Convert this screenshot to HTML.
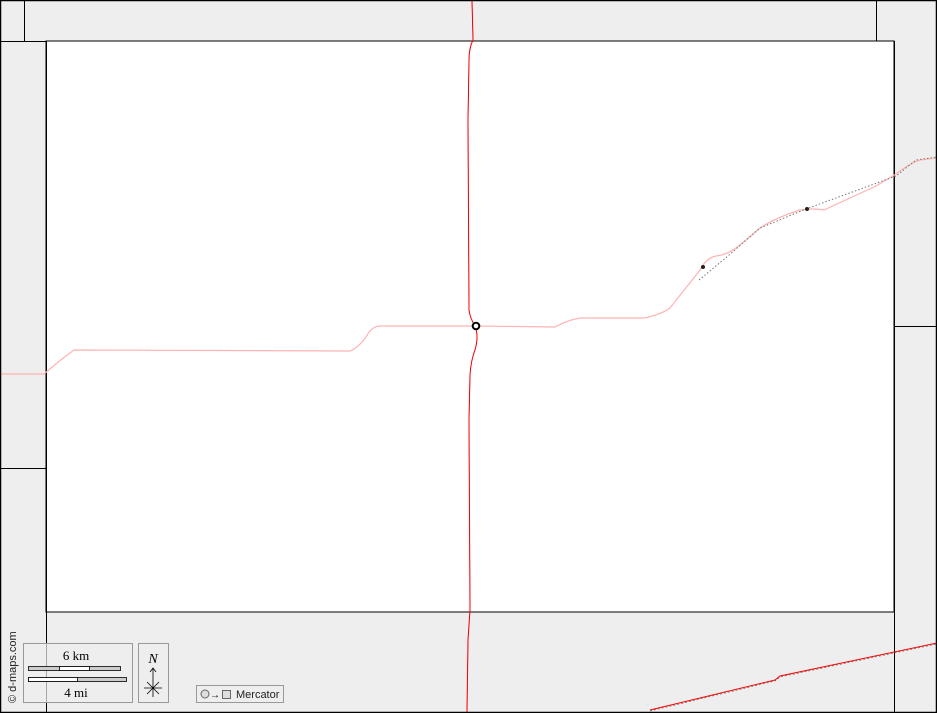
<!DOCTYPE html>
<html><head><meta charset="utf-8"><style>
html,body{margin:0;padding:0;width:937px;height:713px;overflow:hidden;background:#eee}
</style></head><body>
<svg width="937" height="713" viewBox="0 0 937 713" xmlns="http://www.w3.org/2000/svg" style="position:absolute;left:0;top:0">
<rect x="0" y="0" width="937" height="713" fill="#eee"/>
<rect x="46" y="41" width="848" height="571" fill="#fff" stroke="#000" stroke-width="1"/>
<g stroke="#000" stroke-width="1" fill="none">
<line x1="24.5" y1="0" x2="24.5" y2="41"/>
<line x1="0" y1="41.5" x2="46" y2="41.5"/>
<line x1="876.5" y1="0" x2="876.5" y2="41"/>
<line x1="46.5" y1="41" x2="46.5" y2="713"/>
<line x1="0" y1="468.5" x2="46" y2="468.5"/>
<line x1="894.5" y1="41" x2="894.5" y2="713"/>
<line x1="894" y1="326.5" x2="937" y2="326.5"/>
</g>
<!-- vertical road -->
<path d="M472 0 L473 40 Q469 48 469 60 L468 120 L469 310 Q470 318 475 326 Q479 336 475 350 Q471 360 470 375 L469 420 L470 610 L468 640 L467 713" stroke="#000" stroke-width="0.6" fill="none"/>
<path d="M472 0 L473 40 Q469 48 469 60 L468 120 L469 310 Q470 318 475 326 Q479 336 475 350 Q471 360 470 375 L469 420 L470 610 L468 640 L467 713" stroke="#f00" stroke-width="1" fill="none"/>
<!-- horizontal road -->
<path d="M0 374 L44 374 Q60 360 74 350 L350 351 Q358 348 366 337 Q372 326 380 326 L476 326 L555 327 Q570 319 582 318 L645 318 Q662 314 670 308 L700 270 Q706 258 716 256 Q728 255 740 245 L760 228 Q775 218 800 210 Q812 208 824 210 L876 186 L896 174 Q910 163 920 160 L937 158" stroke="#ffb3b3" stroke-width="1.2" fill="none"/>
<path d="M699 280 L728 256 L760 228 L806 209 L896 176 L916 160 L937 157" stroke="#777" stroke-width="1" stroke-dasharray="1.5,2" fill="none"/>
<circle cx="703" cy="267" r="2" fill="#222"/>
<circle cx="807" cy="209" r="2" fill="#222"/>
<circle cx="476" cy="326" r="3.3" fill="#fff" stroke="#000" stroke-width="2"/>
<!-- bottom-right road -->
<path d="M650 710 L775 680 L780 676 L937 643" stroke="#f00" stroke-width="1" fill="none"/>
<path d="M650 711 L775 681 L780 677 L937 644" stroke="#555" stroke-width="0.6" stroke-dasharray="2,2" fill="none"/>
<rect x="0.5" y="0.5" width="936" height="712" fill="none" stroke="#000" stroke-width="1.5"/>
<!-- scale -->
<rect x="23.5" y="643.5" width="109" height="59" fill="#eee" fill-opacity="0.7" stroke="#999"/>
<text x="76" y="660" font-family="Liberation Serif" font-size="13" text-anchor="middle">6 km</text>
<rect x="28.5" y="666.5" width="92" height="4" fill="#ccc" stroke="#000" stroke-width="0.8"/>
<rect x="59.5" y="666.5" width="30" height="4" fill="#fff" stroke="#000" stroke-width="0.8"/>
<rect x="28.5" y="677.5" width="98" height="4" fill="#ccc" stroke="#000" stroke-width="0.8"/>
<rect x="28.5" y="677.5" width="49" height="4" fill="#fff" stroke="#000" stroke-width="0.8"/>
<text x="76" y="697" font-family="Liberation Serif" font-size="13" text-anchor="middle">4 mi</text>
<rect x="138.5" y="643.5" width="30" height="59" fill="#eee" fill-opacity="0.7" stroke="#999"/>
<text x="153" y="663" font-family="Liberation Serif" font-style="italic" font-size="14" text-anchor="middle">N</text>
<path d="M153 668 L153 697 M150 672 L153 668 L156 672 M144 688 L162 688 M147 682 L159 694 M159 682 L147 694" stroke="#000" stroke-width="0.8" fill="none"/>
<rect x="196.5" y="685.5" width="87" height="17" fill="#eee" stroke="#999"/>
<circle cx="205" cy="694" r="4" fill="#ddd" stroke="#666"/>
<text x="210" y="698" font-family="Liberation Sans" font-size="10">→</text>
<rect x="222.5" y="690.5" width="8" height="8" fill="#ddd" stroke="#666"/>
<text x="236" y="698" font-family="Liberation Sans" font-size="11" fill="#222">Mercator</text>
<text transform="translate(16,703) rotate(-90)" font-family="Liberation Sans" font-size="11" fill="#222">© d-maps.com</text>
</svg>
</body></html>
